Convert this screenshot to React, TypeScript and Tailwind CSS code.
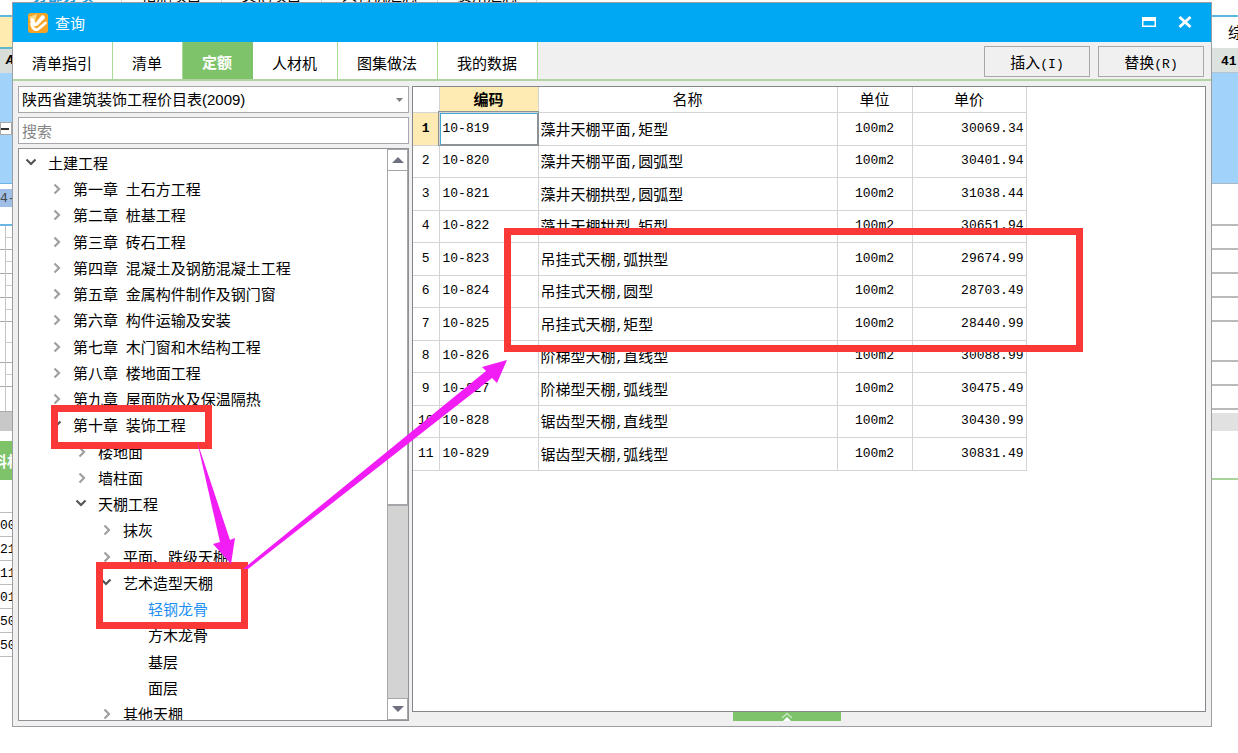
import React, { useState } from "react";

interface TreeNode {
  label: string;
  level: number;
  state?: "open" | "closed";
}

interface Quota {
  code: string;
  name: string;
  price: string;
}

const TABS = ["清单指引", "清单", "定额", "人材机", "图集做法", "我的数据"];

const TREE: TreeNode[] = [
  { label: "土建工程", level: 0, state: "open" },
  { label: "第一章 土石方工程", level: 1, state: "closed" },
  { label: "第二章 桩基工程", level: 1, state: "closed" },
  { label: "第三章 砖石工程", level: 1, state: "closed" },
  { label: "第四章 混凝土及钢筋混凝土工程", level: 1, state: "closed" },
  { label: "第五章 金属构件制作及钢门窗", level: 1, state: "closed" },
  { label: "第六章 构件运输及安装", level: 1, state: "closed" },
  { label: "第七章 木门窗和木结构工程", level: 1, state: "closed" },
  { label: "第八章 楼地面工程", level: 1, state: "closed" },
  { label: "第九章 屋面防水及保温隔热", level: 1, state: "closed" },
  { label: "第十章 装饰工程", level: 1, state: "open" },
  { label: "楼地面", level: 2, state: "closed" },
  { label: "墙柱面", level: 2, state: "closed" },
  { label: "天棚工程", level: 2, state: "open" },
  { label: "抹灰", level: 3, state: "closed" },
  { label: "平面、跌级天棚", level: 3, state: "closed" },
  { label: "艺术造型天棚", level: 3, state: "open" },
  { label: "轻钢龙骨", level: 4 },
  { label: "方木龙骨", level: 4 },
  { label: "基层", level: 4 },
  { label: "面层", level: 4 },
  { label: "其他天棚", level: 3, state: "closed" },
];

const INDENT = ["pl-[5px]", "pl-[30px]", "pl-[55px]", "pl-[80px]", "pl-[105px]"];

const QUOTAS: Quota[] = [
  { code: "10-819", name: "藻井天棚平面,矩型", price: "30069.34" },
  { code: "10-820", name: "藻井天棚平面,圆弧型", price: "30401.94" },
  { code: "10-821", name: "藻井天棚拱型,圆弧型", price: "31038.44" },
  { code: "10-822", name: "藻井天棚拱型,矩型", price: "30651.94" },
  { code: "10-823", name: "吊挂式天棚,弧拱型", price: "29674.99" },
  { code: "10-824", name: "吊挂式天棚,圆型", price: "28703.49" },
  { code: "10-825", name: "吊挂式天棚,矩型", price: "28440.99" },
  { code: "10-826", name: "阶梯型天棚,直线型", price: "30088.99" },
  { code: "10-827", name: "阶梯型天棚,弧线型", price: "30475.49" },
  { code: "10-828", name: "锯齿型天棚,直线型", price: "30430.99" },
  { code: "10-829", name: "锯齿型天棚,弧线型", price: "30831.49" },
];

// Latin runs are set smaller so they stay half as wide as a Chinese character
const Mixed: React.FC<{ text: string }> = ({ text }) => (
  <>
    {text.split(/([\x20-\x7e]+)/).map((part, i) =>
      i % 2 === 1 ? (
        <span
          key={i}
          className="text-[13px] leading-none whitespace-pre font-['Liberation_Mono',monospace]"
        >
          {part}
        </span>
      ) : (
        part
      ),
    )}
  </>
);

const Chevron: React.FC<{ state?: "open" | "closed" }> = ({ state }) => (
  <svg
    className="w-[14px] h-[14px] shrink-0"
    viewBox="0 0 14 14"
    fill="none"
    strokeWidth="2.2"
  >
    {state === "open" && <path d="M2.5 3.5 L7 8 L11.5 3.5" stroke="#555" />}
    {state === "closed" && <path d="M5.5 2.5 L10 7 L5.5 11.5" stroke="#a0a0a0" />}
  </svg>
);

const TitleBar = () => (
  <header className="h-[39px] shrink-0 bg-[#00a8f3] flex items-center pl-[15px] pr-[19px] text-white">
    <svg className="w-5 h-5" viewBox="0 0 20 20">
      <rect width="20" height="20" rx="3" fill="#f6a426" />
      <path d="M1 4 L9 1 L7 8 L4 10 Z" fill="#ffd98a" />
      <path
        d="M2 7 C3 4.5 6 4.5 6.5 7.5 L7.5 10 L13.5 2.5 C15 1.5 17 3 17 5 L9.5 12.5 C8 13.8 6 13.5 4.5 12 Z"
        fill="#fff"
      />
      <path
        d="M3.5 10.5 C4.5 16.5 8 18 11 15.5 L17.5 10"
        stroke="#fff"
        strokeWidth="2.8"
        fill="none"
        strokeLinecap="round"
      />
    </svg>
    <h1 className="ml-[7px] flex-1">查询</h1>
    <div className="flex gap-[22px] pb-[2px]">
      <button type="button" aria-label="最大化">
        <svg className="w-[14px] h-[12px]" viewBox="0 0 14 12">
          <path d="M0 1 H14 V11 H0 Z M1.5 5 V9.5 H12.5 V5 Z" fill="#fff" fillRule="evenodd" />
        </svg>
      </button>
      <button type="button" aria-label="关闭">
        <svg className="w-[14px] h-[12px]" viewBox="0 0 14 12">
          <path d="M1.5 1 L12.5 11 M12.5 1 L1.5 11" stroke="#fff" strokeWidth="2.8" />
        </svg>
      </button>
    </div>
  </header>
);

const TabBar = () => {
  const [active, setActive] = useState("定额");

  return (
    <nav className="h-[39px] shrink-0 flex justify-between border-b-2 border-[#b2d3a4]">
      <div className="flex">
        {TABS.map((tab) => (
          <button
            key={tab}
            type="button"
            onClick={() => setActive(tab)}
            className={
              tab === active
                ? "pl-[19px] pr-5 pt-[2px] border-r border-[#7ec36a] bg-[#7ec36a] text-white font-bold"
                : "pl-[19px] pr-5 pt-[4px] border-r border-[#a6dc95] bg-white"
            }
          >
            {tab}
          </button>
        ))}
      </div>
      <div className="flex gap-2 pt-1 pr-[7px]">
        <button type="button" className="w-[106px] h-[31px] border border-[#a8a8a8]">
          <Mixed text="插入(I)" />
        </button>
        <button type="button" className="w-[106px] h-[31px] border border-[#a8a8a8]">
          <Mixed text="替换(R)" />
        </button>
      </div>
    </nav>
  );
};

const ScrollBar = () => (
  <div className="w-[21px] shrink-0 flex flex-col bg-[#d2d3d2] border-l border-[#a5a6aa]">
    <button
      type="button"
      aria-label="向上滚动"
      className="h-[22px] shrink-0 bg-white border border-l-0 border-[#a5a6aa] flex items-center justify-center"
    >
      <svg className="w-3 h-[6px]" viewBox="0 0 12 6">
        <path d="M0 6 L6 0 L12 6 Z" fill="#6f7080" />
      </svg>
    </button>
    <div className="h-[335px] bg-white border-b-2 border-r border-[#a5a6aa]" />
    <button
      type="button"
      aria-label="向下滚动"
      className="mt-auto h-[22px] shrink-0 bg-white border border-l-0 border-[#a5a6aa] flex items-center justify-center"
    >
      <svg className="w-3 h-[6px]" viewBox="0 0 12 6">
        <path d="M0 0 L6 6 L12 0 Z" fill="#6f7080" />
      </svg>
    </button>
  </div>
);

const QuotaTree = () => {
  const [selected, setSelected] = useState("轻钢龙骨");

  return (
    <div className="flex-1 min-h-0 flex bg-white border border-[#909196]">
      <ul className="flex-1 min-w-0 pt-px overflow-hidden">
        {TREE.map((node) => (
          <li key={node.label} className="h-[26px] nth-[4n]:h-[27px]">
            <button
              type="button"
              onClick={() => setSelected(node.label)}
              className={`w-full h-full flex items-center gap-[10px] whitespace-nowrap ${INDENT[node.level]} ${
                node.label === selected ? "text-[#1e90f5]" : ""
              }`}
            >
              <Chevron state={node.state} />
              <span>
                <Mixed text={node.label} />
              </span>
            </button>
          </li>
        ))}
      </ul>
      <ScrollBar />
    </div>
  );
};

const Sidebar = () => (
  <aside className="w-[391px] shrink-0 flex flex-col">
    <div className="relative mb-1">
      <select
        aria-label="定额库"
        className="w-full h-[27px] pl-[3px] bg-white border border-[#a8a8ac] appearance-none font-['Liberation_Sans','Noto_Sans_CJK_SC',sans-serif]"
      >
        <option>陕西省建筑装饰工程价目表(2009)</option>
      </select>
      <svg
        className="absolute right-[6px] top-[12px] w-[7px] h-1 pointer-events-none"
        viewBox="0 0 7 4"
      >
        <path d="M0 0 H7 L3.5 4 Z" fill="#808080" />
      </svg>
    </div>
    <input
      type="text"
      aria-label="搜索"
      placeholder="搜索"
      className="w-full h-[27px] mb-1 pl-[3px] bg-white border border-[#a8a8ac] placeholder:text-[#858585]"
    />
    <QuotaTree />
  </aside>
);

const QuotaTable = () => (
  <table className="table-fixed w-[613px] border-collapse leading-5">
    <colgroup>
      <col className="w-[26px]" />
      <col className="w-[99px]" />
      <col className="w-[299px]" />
      <col className="w-[75px]" />
      <col className="w-[114px]" />
    </colgroup>
    <thead>
      <tr className="h-[25px]">
        <th className="border-r border-b border-[#d4d4d4]" />
        <th className="border-r border-b border-[#d4d4d4] p-0 bg-[#fdebb3] font-bold">编码</th>
        <th className="border-r border-b border-[#d4d4d4] p-0 font-normal">名称</th>
        <th className="border-r border-b border-[#d4d4d4] p-0 font-normal">单位</th>
        <th className="border-r border-b border-[#d4d4d4] p-0 font-normal">单价</th>
      </tr>
    </thead>
    <tbody>
      {QUOTAS.map((quota, index) => (
        <tr key={quota.code} className="h-[32px] odd:h-[33px]">
          <td
            className={`border-r border-b border-[#d4d4d4] p-0 text-center text-[13px] font-['Liberation_Mono',monospace] ${
              index === 0 ? "bg-[#fdebb3] font-bold" : ""
            }`}
          >
            {index + 1}
          </td>
          <td
            className={`border-r border-b border-[#d4d4d4] py-0 pl-[3px] text-[13px] font-['Liberation_Mono',monospace] ${
              index === 0
                ? "outline-1 outline-[#8c9296] shadow-[inset_1px_1px_0_#3fa9d0,inset_-1px_-1px_0_#8c9296]"
                : ""
            }`}
          >
            {quota.code}
          </td>
          <td className="border-r border-b border-[#d4d4d4] py-0 pl-[2px] whitespace-nowrap">
            <Mixed text={quota.name} />
          </td>
          <td className="border-r border-b border-[#d4d4d4] p-0 text-center text-[13px] font-['Liberation_Mono',monospace]">
            100m2
          </td>
          <td className="border-r border-b border-[#d4d4d4] py-0 pr-[2px] text-right text-[13px] font-['Liberation_Mono',monospace]">
            {quota.price}
          </td>
        </tr>
      ))}
    </tbody>
  </table>
);

const QueryDialog = () => (
  <section
    role="dialog"
    aria-label="查询"
    className="absolute top-[2px] bottom-[26px] left-3 right-[26px] flex flex-col bg-[#f0f0f0] border border-[#9c9ea2]"
  >
    <TitleBar />
    <TabBar />
    <div className="flex-1 min-h-0 flex gap-[3px] p-[5px]">
      <Sidebar />
      <main className="flex-1 min-w-0 flex flex-col">
        <div className="flex-1 min-h-0 bg-white border border-[#85868c]">
          <QuotaTable />
        </div>
        <div className="flex justify-center pr-[44px]">
          <button
            type="button"
            aria-label="展开"
            className="w-[108px] h-[9px] bg-[#7ec36a] flex justify-center"
          >
            <svg className="w-3 h-[9px]" viewBox="0 0 12 9" fill="none">
              <path d="M1 6 L6 1.5 L11 6" stroke="#c5e6bb" strokeWidth="1.6" />
              <path d="M2 9 L6 5 L10 9 Z" fill="#fff" />
            </svg>
          </button>
        </div>
      </main>
    </div>
  </section>
);

const LEFT_VALUES = ["00", "21", "11", "01", "50", "50"];

// Main window of the estimating software, mostly hidden behind the dialog
const Backdrop = () => (
  <div>
    <div className="h-[15px] flex overflow-hidden">
      <div className="-mt-[13px] pl-[21px] flex leading-4 text-center">
        <span className="w-[100px] pr-4 font-bold text-[#1e9be0]">分部分项</span>
        <span className="w-[100px] border-l border-[#d4d4d4]">措施项目</span>
        <span className="w-[100px] border-l border-[#d4d4d4]">其他项目</span>
        <span className="w-[116px] border-l border-[#d4d4d4]">人材机汇总</span>
        <span className="w-[100px] border-x border-[#d4d4d4]">费用汇总</span>
      </div>
    </div>
    <div className="flex justify-between border-t-2 border-[#5fb8dd]">
      <div className="w-3 overflow-hidden whitespace-nowrap">
        <div className="h-[32px] bg-[#fdebb0] border-b-2 border-[#5fb8c8]" />
        <div className="h-6 bg-[#d8dfdb] pl-[6px] leading-6 text-[13px] font-bold italic font-['Liberation_Mono',monospace]">
          A
        </div>
        <div className="h-[111px] pt-[49px] bg-[#a0d2fa] border-b border-[#6bb4e8]">
          <div className="h-[13px] bg-white border border-[#a8a8a8] flex items-center">
            <div className="w-2 h-[2px] bg-[#333]" />
          </div>
        </div>
        <div className="h-[42px] pt-[5px] border-b-2 border-[#6db8e2]">
          <div className="h-[18px] bg-[#9fbfe8] leading-[20px] text-[13px] text-[#444] font-['Liberation_Mono',monospace]">
            4-
          </div>
        </div>
        <div className="flex h-[185px]">
          <div className="w-[6px] border-r border-[#c4c4c4]">
            {[0, 1, 2, 3].map((n) => (
              <div key={n} className="h-6 border-b border-[#ababab]" />
            ))}
            <div className="h-[41px] border-b border-[#ababab]" />
            <div className="h-6 border-b border-[#ababab]" />
          </div>
          <div className="flex-1">
            {[0, 1, 2, 3].map((n) => (
              <div key={n} className="h-6 pt-[11px] border-b border-[#ababab]">
                <div className="border-t border-[#ccc]" />
              </div>
            ))}
            <div className="h-[41px] pt-5 border-b border-[#ababab]">
              <div className="border-t border-[#ccc]" />
            </div>
            <div className="h-6 pt-[11px] border-b border-[#ababab]">
              <div className="border-t border-[#ccc]" />
            </div>
          </div>
        </div>
        <div className="h-[20px] mb-[10px] bg-[#c8c8c8] border-t border-[#ababab]" />
        <div className="h-[39px] bg-[#7ec36a] flex items-center font-bold text-white">
          <span className="-ml-2">料机</span>
        </div>
        <div className="h-[33px] border-b border-[#bcbcbc]" />
        {LEFT_VALUES.map((value, i) => (
          <div
            key={i}
            className="h-6 border-b border-[#bcbcbc] leading-[26px] text-[13px] font-['Liberation_Mono',monospace]"
          >
            {value}
          </div>
        ))}
      </div>
      <div className="w-[26px] overflow-hidden whitespace-nowrap">
        <div className="h-[31px] pl-4 leading-[30px]">综合单价</div>
        <div className="h-[25px] pl-[9px] bg-[#dce2de] leading-[28px] text-[13px] font-bold border-b border-[#b4c4d0] font-['Liberation_Mono',monospace]">
          41
        </div>
        <div className="h-[111px] bg-[#a0d2fa] border-b border-[#a8b8c4]" />
        <div className="h-[42px] border-b-2 border-[#bababa]" />
        {[0, 1, 2, 3].map((n) => (
          <div key={n} className="h-6 border-b-2 border-[#bababa]" />
        ))}
        <div className="h-[40px] border-b-2 border-[#bababa]" />
        <div className="h-6 border-b-2 border-[#bababa]" />
        <div className="h-6 border-b-2 border-[#bababa]" />
        <div className="h-[18px] mt-[3px] bg-[#e1e1e1]" />
        <div className="h-[49px] border-b-2 border-[#a9d39b]" />
      </div>
    </div>
  </div>
);

// Tutorial marks drawn over the dialog: red frames and the arrows between them
const Annotations = () => (
  <svg className="absolute top-0 left-0 w-full h-full pointer-events-none">
    <g fill="none" stroke="#fb3838" strokeWidth="7">
      <rect x="54.5" y="408.5" width="154" height="37" />
      <rect x="99.5" y="565.5" width="145" height="60" />
      <rect x="507.5" y="231.5" width="572" height="117" />
    </g>
    <g fill="#f21df4">
      <path d="M197 441 L230 540 L235 538 L231 564 L213 544 L220 542 Z" />
      <path d="M243 569 L486 371 L482 367 L507 360 L497 383 L492 378 L248 569 Z" />
    </g>
  </svg>
);

const App = () => (
  <div className="relative h-screen overflow-hidden bg-white text-black text-[15px] leading-5 font-['Noto_Sans_CJK_SC',sans-serif]">
    <Backdrop />
    <QueryDialog />
    <Annotations />
  </div>
);

export default App;
